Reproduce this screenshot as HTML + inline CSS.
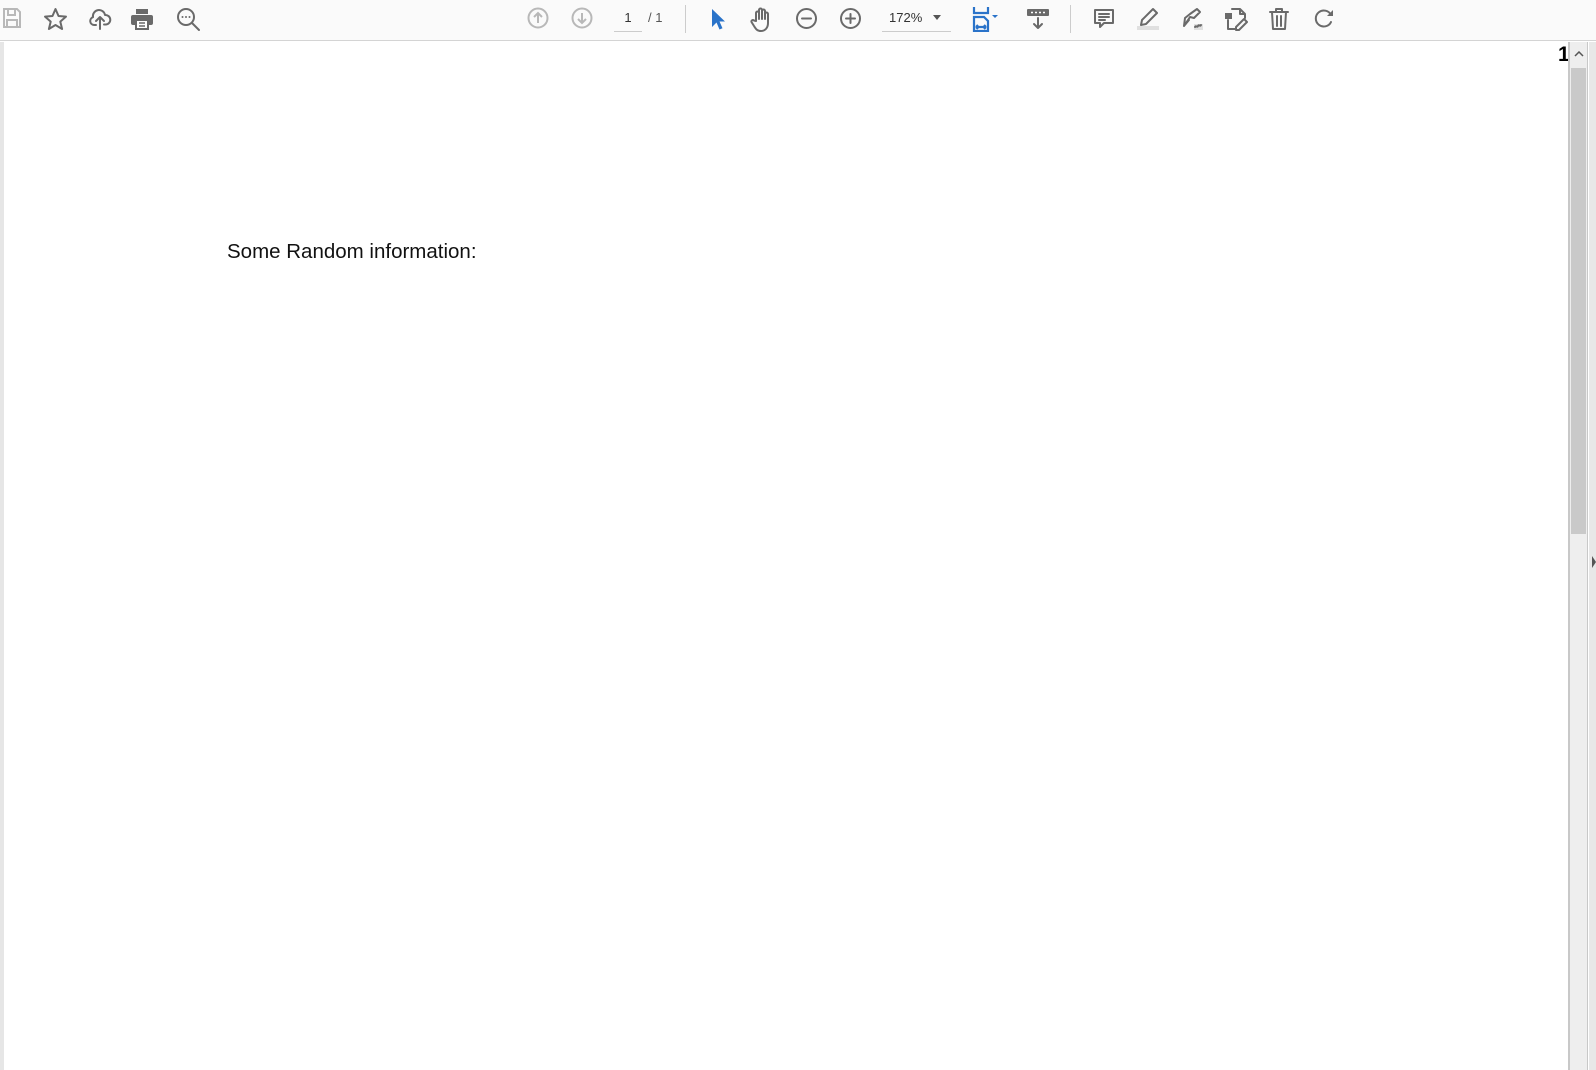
<!DOCTYPE html>
<html><head><meta charset="utf-8">
<style>
*{margin:0;padding:0;box-sizing:border-box}
html,body{width:1596px;height:1070px;overflow:hidden;background:#fff;font-family:"Liberation Sans",sans-serif}
#tb{position:absolute;left:0;top:0;width:1596px;height:41px;background:#fafafa;border-bottom:1px solid #d4d4d4}
#tb svg{position:absolute;top:7px}
.g{fill:none;stroke:#6a6a6a;stroke-width:2;stroke-linecap:round;stroke-linejoin:round}
.lg{fill:none;stroke:#b8b8b8;stroke-width:2}
.bl{fill:none;stroke:#2a73c9;stroke-width:2.2}
#left{position:absolute;left:0;top:42px;width:4px;height:1028px;background:#e6e6e6}
#txt{position:absolute;left:227px;top:240px;font-size:20.5px;color:#111;white-space:nowrap}
#pn{position:absolute;left:1558px;top:43px;font-size:21px;font-weight:bold;color:#000}
#sb{position:absolute;left:1568px;top:42px;width:20px;height:1028px;background:#eeeeee;border-left:2px solid #c8c8c8;border-right:1px solid #c8c8c8}
#thumb{position:absolute;left:1571px;top:68px;width:15px;height:466px;background:#c9c9c9}
#rp{position:absolute;left:1589px;top:42px;width:7px;height:1028px;background:#e8e8e8}
</style></head><body>
<div id="tb">
<svg style="left:2px" width="20" height="22" viewBox="0 0 20 22"><path class="lg" d="M2 2h13l3 3v15H2z M6 2v6h7V2 M5 13h10v7H5z"/></svg>
<svg style="left:43px" width="25" height="24" viewBox="0 0 25 24"><path class="g" d="M12.5 2l3 7 7.5.6-5.7 5 1.8 7.4-6.6-4-6.6 4 1.8-7.4L2 9.6 9.5 9z"/></svg>
<svg style="left:88px" width="24" height="24" viewBox="0 0 24 24"><path class="g" d="M8 18H6a4 4 0 0 1-1-7.8A6 6 0 0 1 17 8a4.5 4.5 0 0 1 1 9.5h-2 M12 22V11 M8 14l4-4 4 4"/></svg>
<svg style="left:130px" width="24" height="24" viewBox="0 0 24 24"><rect x="6" y="2" width="12" height="5" fill="#6a6a6a"/><rect x="1" y="8" width="22" height="10" rx="2" fill="#6a6a6a"/><rect x="6" y="13" width="12" height="9" fill="#fff" stroke="#6a6a6a" stroke-width="2"/><path d="M9 16h6M9 19h6" stroke="#6a6a6a" stroke-width="1.5"/></svg>
<svg style="left:176px" width="25" height="25" viewBox="0 0 25 25"><circle cx="10" cy="10" r="8" class="g"/><path class="g" d="M16 16l7 7"/><circle cx="6.5" cy="10" r="1" fill="#6a6a6a"/><circle cx="10" cy="10" r="1" fill="#6a6a6a"/><circle cx="13.5" cy="10" r="1" fill="#6a6a6a"/></svg>
<svg style="left:527px" width="22" height="22" viewBox="0 0 22 22"><circle cx="11" cy="11" r="9.5" class="lg"/><path class="lg" d="M11 16V6M7 10l4-4 4 4"/></svg>
<svg style="left:571px" width="22" height="22" viewBox="0 0 22 22"><circle cx="11" cy="11" r="9.5" class="lg"/><path class="lg" d="M11 6v10M7 12l4 4 4-4"/></svg>
<div style="position:absolute;left:614px;top:10px;width:28px;height:22px;border-bottom:1px solid #ccc;text-align:center;font-size:13px;color:#333">1</div>
<div style="position:absolute;left:648px;top:10px;font-size:13px;color:#555">/ 1</div>
<div style="position:absolute;left:685px;top:5px;width:1px;height:28px;background:#ccc"></div>
<svg style="left:710px" width="16" height="24" viewBox="0 0 16 24"><path d="M2 2v18l4.5-4.5 3 7 3-1.3-3-6.7H15z" fill="#2a73c9"/></svg>
<svg style="left:750px" width="24" height="26" viewBox="0 0 24 26"><path class="g" d="M6 14V6a1.5 1.5 0 0 1 3 0v6V3a1.5 1.5 0 0 1 3 0v9V4a1.5 1.5 0 0 1 3 0v8V7a1.5 1.5 0 0 1 3 0v9c0 5-3 8-7 8s-5-2-7-5l-2.5-4a1.5 1.5 0 0 1 2.5-1.5z"/></svg>
<svg style="left:795px" width="23" height="23" viewBox="0 0 23 23"><circle cx="11.5" cy="11.5" r="9.5" class="g"/><path class="g" d="M7 11.5h9"/></svg>
<svg style="left:839px" width="23" height="23" viewBox="0 0 23 23"><circle cx="11.5" cy="11.5" r="9.5" class="g"/><path class="g" d="M7 11.5h9M11.5 7v9"/></svg>
<div style="position:absolute;left:882px;top:10px;width:69px;height:22px;border-bottom:1px solid #ccc;font-size:13px;color:#333;padding-left:7px">172%</div>
<svg style="left:933px;top:15px" width="8" height="5" viewBox="0 0 8 5"><path d="M0 0h8L4 5z" fill="#555"/></svg>
<svg style="left:972px" width="28" height="25" viewBox="0 0 28 25"><path class="bl" d="M2 0v6h14V0 M2 24V10h10l4 4v10z M4 20h10M4 20l2-2M4 20l2 2M14 20l-2-2M14 20l-2 2"/><path d="M20 8h6l-3 3z" fill="#2a73c9"/></svg>
<svg style="left:1026px" width="24" height="24" viewBox="0 0 24 24"><rect x="1" y="2" width="22" height="7" rx="1" fill="#6a6a6a"/><path d="M5 5.5h2M9 5.5h2M13 5.5h2M17 5.5h2" stroke="#fff" stroke-width="1.5"/><path class="g" d="M12 11v10M8 17l4 4 4-4"/></svg>
<div style="position:absolute;left:1070px;top:5px;width:1px;height:28px;background:#ccc"></div>
<svg style="left:1092px" width="24" height="24" viewBox="0 0 24 24"><path class="g" d="M3 3h18v13h-9l-4 4v-4H3z M7 7h10M7 10h10M7 13h6"/></svg>
<svg style="left:1136px" width="24" height="24" viewBox="0 0 24 24"><rect x="1" y="19" width="22" height="4" fill="#e0e0e0"/><path class="g" d="M17 2l4 4-11 11-5 1 1-5z"/></svg>
<svg style="left:1180px" width="24" height="24" viewBox="0 0 24 24"><rect x="14" y="17" width="9" height="6" fill="#e0e0e0"/><path class="g" d="M17 2l3 3-6 6-4-1-6 9 1-8 5-4z M4 19l5-6 M15 20c1-2 2 1 3-1s2 1 3-1"/></svg>
<svg style="left:1224px" width="24" height="24" viewBox="0 0 24 24"><path class="g" d="M8 2h8l5 5v4 M16 2v5h5 M4 13v9h7"/><rect x="1" y="6" width="7" height="6" fill="#6a6a6a"/><path class="g" d="M20 12l3 3-8 8h-3v-3z"/></svg>
<svg style="left:1268px" width="22" height="24" viewBox="0 0 22 24"><path class="g" d="M2 5h18M8 5V2h6v3M4 5l1 17h12l1-17M9 9v10M13 9v10"/></svg>
<svg style="left:1312px" width="24" height="24" viewBox="0 0 24 24"><path class="g" d="M19 15a8 8 0 1 1 0-7"/><path d="M15 9h6V3z" fill="#6a6a6a"/></svg>
</div>
<div id="left"></div>
<div id="txt">Some Random information:</div>
<div id="pn">1</div>
<div id="sb"></div>
<div id="thumb"></div>
<svg style="position:absolute;left:1574px;top:51px" width="10" height="6" viewBox="0 0 10 6"><path d="M1 5l4-4 4 4" fill="none" stroke="#555" stroke-width="1.5"/></svg>
<div id="rp"></div>
<svg style="position:absolute;left:1592px;top:556px" width="4" height="12" viewBox="0 0 4 12"><path d="M0 0l4 6-4 6z" fill="#555"/></svg>
</body></html>
